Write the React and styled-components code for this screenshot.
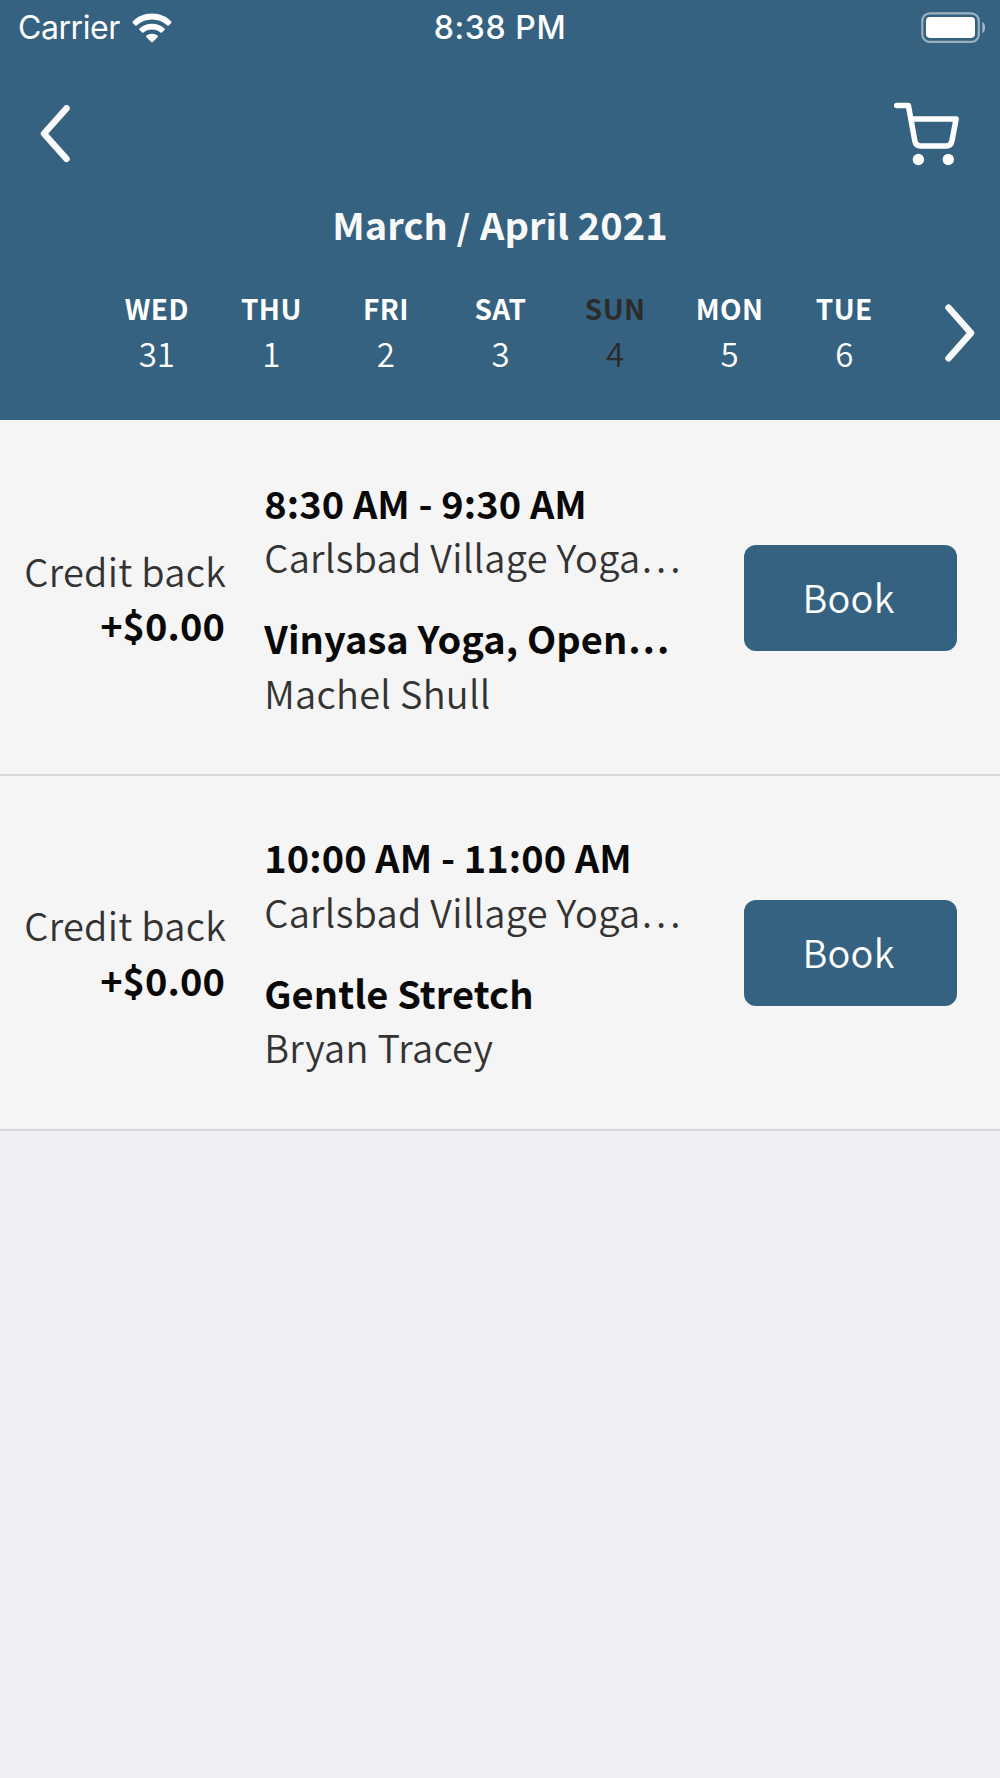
import React from "react";
import styled, { createGlobalStyle } from "styled-components";

const days = [
  { name: "WED", date: 31 },
  { name: "THU", date: 1 },
  { name: "FRI", date: 2 },
  { name: "SAT", date: 3 },
  { name: "SUN", date: 4, selected: true },
  { name: "MON", date: 5 },
  { name: "TUE", date: 6 },
];

const classes = [
  {
    time: "8:30 AM - 9:30 AM",
    studio: "Carlsbad Village Yoga…",
    title: "Vinyasa Yoga, Open…",
    teacher: "Machel Shull",
    credit: "+$0.00",
  },
  {
    time: "10:00 AM - 11:00 AM",
    studio: "Carlsbad Village Yoga…",
    title: "Gentle Stretch",
    teacher: "Bryan Tracey",
    credit: "+$0.00",
  },
];

const WifiIcon = () => (
  <svg width="42" height="32" viewBox="0 0 42 32" fill="#fff">
    <path d="M21 1.6C29 1.6 35.8 4.9 40.2 9.4Q41 10.2 40.2 11L37.7 13.5Q37 14.1 36.3 13.5C32.3 9.8 27 7.6 21 7.6S9.7 9.8 5.7 13.5Q5 14.1 4.3 13.5L1.8 11Q1 10.2 1.8 9.4C6.2 4.9 13 1.6 21 1.6Z" />
    <path d="M21 11.8C26 11.8 30.3 13.7 33.5 16.6Q34.2 17.3 33.5 18L30.8 20.6Q30.2 21.2 29.5 20.6C27.2 18.7 24.3 17.5 21 17.5S14.8 18.7 12.5 20.6Q11.8 21.2 11.2 20.6L8.5 18Q7.8 17.3 8.5 16.6C11.7 13.7 16 11.8 21 11.8Z" />
    <path d="M21 21.7C23.3 21.7 25.3 22.5 26.8 23.8Q27.4 24.4 26.8 25L21.7 30.1Q21 30.8 20.3 30.1L15.2 25Q14.6 24.4 15.2 23.8C16.7 22.5 18.7 21.7 21 21.7Z" />
  </svg>
);

const BatteryIcon = () => (
  <svg width="66" height="32" viewBox="0 0 66 32">
    <rect x="2.3" y="1.3" width="56.5" height="28.6" rx="7.5" fill="none" stroke="#fff" strokeOpacity="0.5" strokeWidth="2.2" />
    <rect x="6" y="5.1" width="49" height="20.8" rx="3.8" fill="#fff" />
    <path d="M62.3 9.8C66 11.500 66 19.500 62.3 21.200Z" fill="#fff" fillOpacity="0.55" />
  </svg>
);

const ChevronIcon = ({ next }) => (
  <svg width="30" height="58" viewBox="0 0 30 58" fill="none" stroke="#fafafa" strokeWidth="6.5" strokeLinecap="round" strokeLinejoin="round">
    <path d={next ? "M3.5 3.7L26 29L3.5 54.3" : "M26.5 3.3L4 28.6L26.5 53.9"} />
  </svg>
);

const CartIcon = () => (
  <svg width="68" height="66" viewBox="0 0 68 66" fill="none" stroke="#fff" strokeWidth="5.5" strokeLinecap="round" strokeLinejoin="round">
    <path d="M3.7 4.5H15.4L21.9 40.3Q22.8 45 27.5 45H53.3Q58 45 58.9 40.3L63.1 18H18" />
    <circle cx="25.4" cy="58.5" r="5.7" fill="#fff" stroke="none" />
    <circle cx="55.3" cy="58.5" r="5.7" fill="#fff" stroke="none" />
  </svg>
);

const App = () => (
  <Screen>
    <GlobalStyle />
    <Header>
      <StatusBar>
        <Carrier>
          <span>Carrier</span>
          <WifiIcon />
        </Carrier>
        <Clock>8:38 PM</Clock>
        <Battery>
          <BatteryIcon />
        </Battery>
      </StatusBar>
      <NavBar>
        <IconButton aria-label="Back">
          <ChevronIcon />
        </IconButton>
        <IconButton aria-label="Cart">
          <CartIcon />
        </IconButton>
      </NavBar>
      <MonthTitle>March / April 2021</MonthTitle>
      <Week>
        <Days>
          {days.map((day) => (
            <Day key={day.name} selected={day.selected}>
              <DayName>{day.name}</DayName>
              <DayDate>{day.date}</DayDate>
            </Day>
          ))}
        </Days>
        <IconButton aria-label="Next week">
          <ChevronIcon next />
        </IconButton>
      </Week>
    </Header>
    <ClassList>
      {classes.map((item) => (
        <ClassRow key={item.time}>
          <Credit>
            <Line>Credit back</Line>
            <Amount>{item.credit}</Amount>
          </Credit>
          <Info>
            <div>
              <StrongLine>{item.time}</StrongLine>
              <Line>{item.studio}</Line>
            </div>
            <div>
              <StrongLine>{item.title}</StrongLine>
              <Line>{item.teacher}</Line>
            </div>
          </Info>
          <BookButton>Book</BookButton>
        </ClassRow>
      ))}
    </ClassList>
  </Screen>
);

export default App;

const GlobalStyle = createGlobalStyle`
  body {
    margin: 0;
    background-color: #efeff4;
  }
  * {
    box-sizing: border-box;
  }
`;

const Screen = styled.div`
  width: 1000px;
  min-height: 1778px;
  background-color: #efeff4;
  font-family: "Noto Sans CJK JP", "Noto Sans", sans-serif;
`;

const Header = styled.header`
  height: 420px;
  background-color: #356280;
  color: #fff;
`;

const StatusBar = styled.div`
  display: grid;
  grid-template-columns: 1fr auto 1fr;
  align-items: center;
  height: 55px;
  padding: 0 14px 0 18px;
  font-family: Inter, "Liberation Sans", sans-serif;
  font-size: 32px;
`;

const Carrier = styled.div`
  display: flex;
  align-items: center;
  gap: 11.5px;
  letter-spacing: -0.45px;
`;

const Clock = styled.div`
  padding-right: 4px;
  font-weight: 500;
  letter-spacing: 0.6px;
`;

const Battery = styled.div`
  display: flex;
  justify-content: flex-end;
`;

const NavBar = styled.nav`
  display: flex;
  justify-content: space-between;
  align-items: center;
  height: 158px;
  padding: 0 39px 0 40px;
`;

const IconButton = styled.button`
  display: flex;
  padding: 0;
  border: none;
  background: none;
`;

const MonthTitle = styled.h1`
  height: 40px;
  margin: 0;
  overflow: hidden;
  color: #f9f9fa;
  font-size: 38px;
  font-weight: 700;
  line-height: 21px;
  letter-spacing: 0.05px;
  text-align: center;
`;

const Week = styled.div`
  display: flex;
  align-items: center;
  gap: 43px;
  padding: 35px 0 0 99.5px;
`;

const Days = styled.div`
  display: grid;
  grid-template-columns: repeat(7, 1fr);
  width: 802px;
`;

const Day = styled.div`
  color: ${(props) => (props.selected ? "#2b2b2c" : "#fff")};
  text-align: center;
`;

const DayName = styled.div`
  font-size: 28px;
  font-weight: 700;
  line-height: 40px;
  letter-spacing: 0.4px;
`;

const DayDate = styled.div`
  margin-top: 1px;
  font-size: 33px;
  font-weight: 350;
  line-height: 48px;
`;

const ClassList = styled.main`
  padding-top: 2px;
  background-color: #f5f5f5;
`;

const ClassRow = styled.section`
  display: flex;
  align-items: center;
  height: 354.4px;
  padding-right: 43px;
  border-bottom: 2px solid #d7d7d7;
`;

const Credit = styled.div`
  width: 226px;
  text-align: right;
`;

const Info = styled.div`
  display: flex;
  flex: 1;
  flex-direction: column;
  gap: 26.6px;
  padding-left: 38.3px;
`;

const Line = styled.div`
  color: #333;
  font-size: 38px;
  font-weight: 350;
  line-height: 54.4px;
  letter-spacing: 0.26px;
  white-space: nowrap;
`;

const StrongLine = styled(Line)`
  color: #090909;
  font-weight: 700;
  letter-spacing: 0.07px;
`;

const Amount = styled(StrongLine)`
  padding-right: 1px;
`;

const BookButton = styled.button`
  width: 213px;
  height: 106px;
  padding: 0 4px 3px 0;
  border: none;
  border-radius: 12px;
  background-color: #356280;
  color: #fff;
  font-family: inherit;
  font-size: 38px;
  font-weight: 350;
  letter-spacing: 0.2px;
`;
